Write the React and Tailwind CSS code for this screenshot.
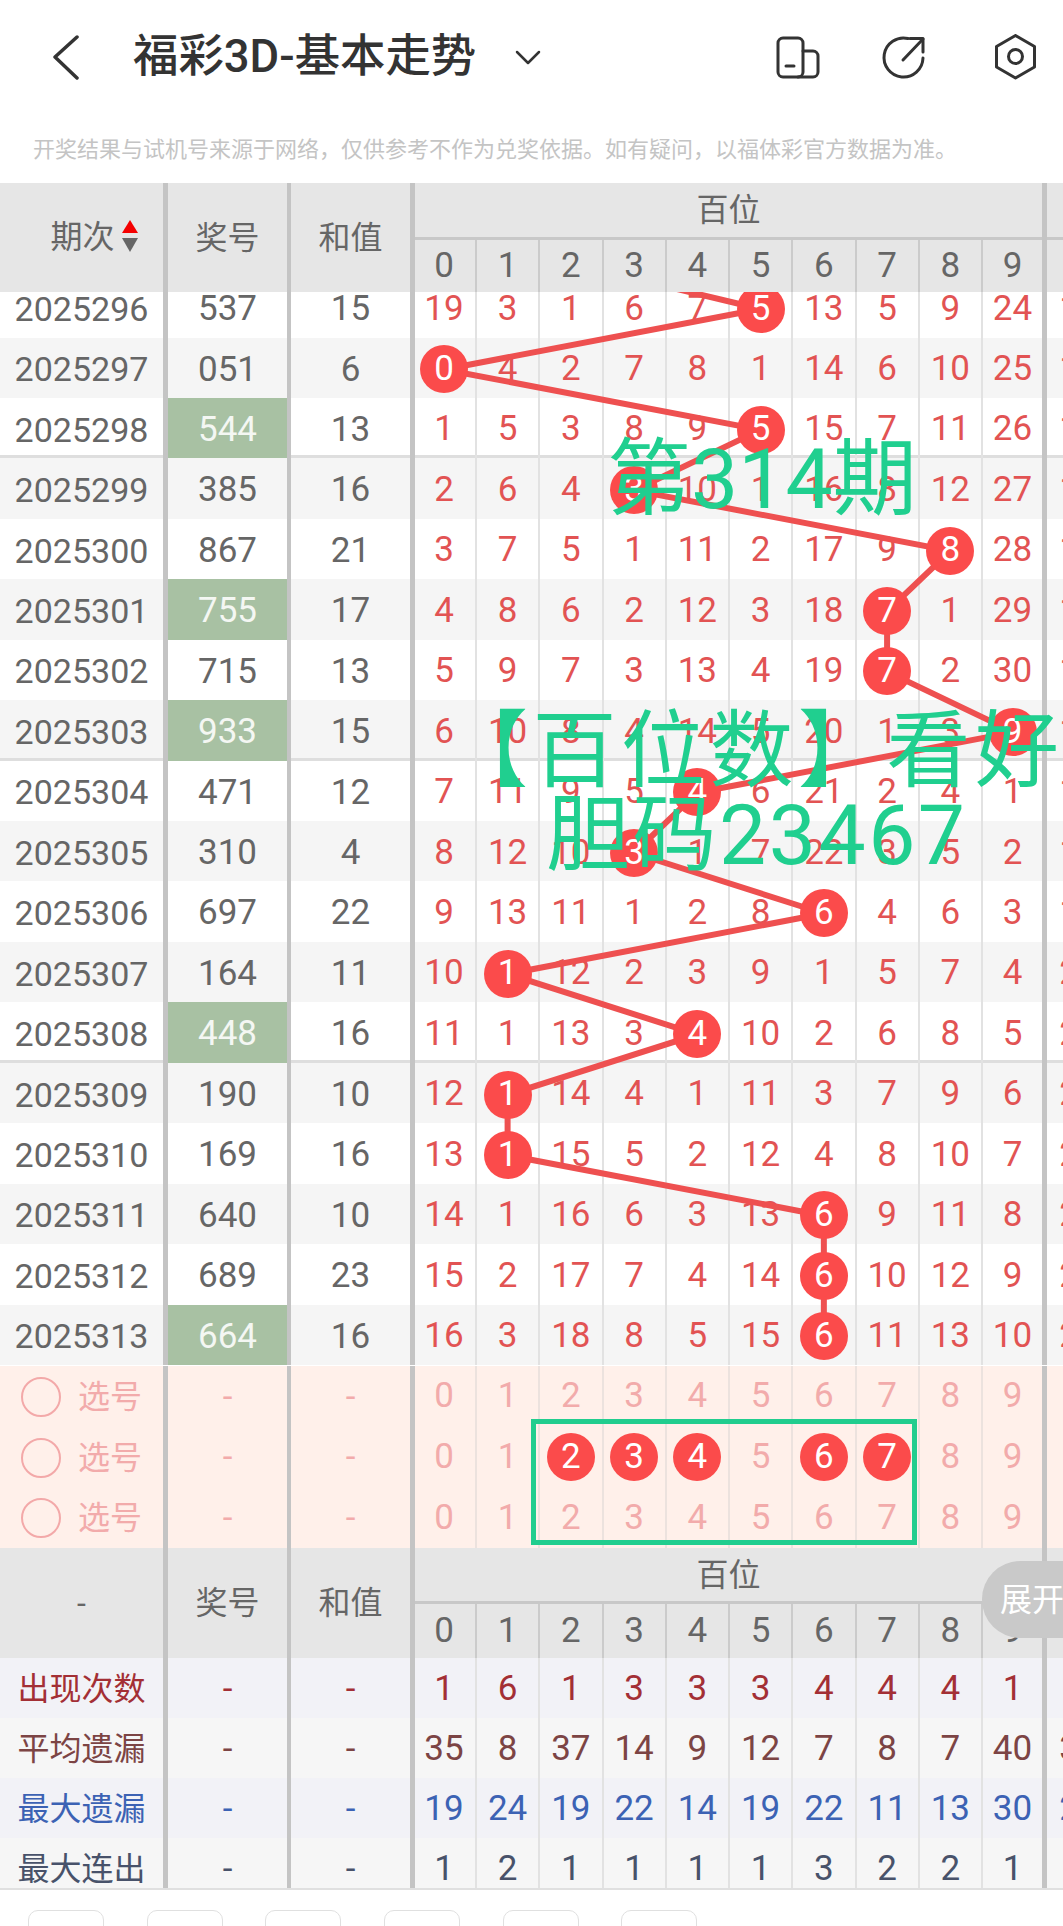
const FONT = { fontFamily: 'Roboto, "Noto Sans CJK SC", sans-serif' };

const rows = [
  ['2025296', '537', '15', [19, 3, 1, 6, 7, 5, 13, 5, 9, 24], 5, '15'],
  ['2025297', '051', '6', [0, 4, 2, 7, 8, 1, 14, 6, 10, 25], 0, '16'],
  ['2025298', '544', '13', [1, 5, 3, 8, 9, 5, 15, 7, 11, 26], 5, '17'],
  ['2025299', '385', '16', [2, 6, 4, 3, 10, 1, 16, 8, 12, 27], 3, '18'],
  ['2025300', '867', '21', [3, 7, 5, 1, 11, 2, 17, 9, 8, 28], 8, '19'],
  ['2025301', '755', '17', [4, 8, 6, 2, 12, 3, 18, 7, 1, 29], 7, '10'],
  ['2025302', '715', '13', [5, 9, 7, 3, 13, 4, 19, 7, 2, 30], 7, '11'],
  ['2025303', '933', '15', [6, 10, 8, 4, 14, 5, 20, 1, 3, 9], 9, '12'],
  ['2025304', '471', '12', [7, 11, 9, 5, 4, 6, 21, 2, 4, 1], 4, '13'],
  ['2025305', '310', '4', [8, 12, 10, 3, 1, 7, 22, 3, 5, 2], 3, '14'],
  ['2025306', '697', '22', [9, 13, 11, 1, 2, 8, 6, 4, 6, 3], 6, '15'],
  ['2025307', '164', '11', [10, 1, 12, 2, 3, 9, 1, 5, 7, 4], 1, '20'],
  ['2025308', '448', '16', [11, 1, 13, 3, 4, 10, 2, 6, 8, 5], 4, '21'],
  ['2025309', '190', '10', [12, 1, 14, 4, 1, 11, 3, 7, 9, 6], 1, '22'],
  ['2025310', '169', '16', [13, 1, 15, 5, 2, 12, 4, 8, 10, 7], 1, '23'],
  ['2025311', '640', '10', [14, 1, 16, 6, 3, 13, 6, 9, 11, 8], 6, '24'],
  ['2025312', '689', '23', [15, 2, 17, 7, 4, 14, 6, 10, 12, 9], 6, '25'],
  ['2025313', '664', '16', [16, 3, 18, 8, 5, 15, 6, 11, 13, 10], 6, '26'],
];

const highlighted = new Set(['2025298', '2025301', '2025303', '2025308', '2025313']);
const digits = [0, 1, 2, 3, 4, 5, 6, 7, 8, 9];

const colX = (i) => (i === 0 ? 444 : 507.6 + 63.25 * (i - 1));
const rowY = (k) => 32 + 60.45 * k;

function Ball({ n }) {
  return (
    <span className="relative z-10 flex h-[48px] w-[48px] shrink-0 items-center justify-center rounded-full bg-[#fb4b4b] text-white">
      {n}
    </span>
  );
}

function DigitCells({ values, border, render, pad = '' }) {
  return (
    <>
      {values.map((v, i) => {
        let size = 'w-[63.25px] border-r-2';
        if (i === 0) size = 'w-[62px] border-r-2 pr-[2px]';
        if (i === 9) size = 'w-[59px]';
        return (
          <div key={i} className={`flex h-full items-center justify-center ${size} ${border} ${pad}`}>
            {render ? render(v, i) : v}
          </div>
        );
      })}
    </>
  );
}

function LeftCols({ a, b, c, pad = '' }) {
  const sep = 'border-[#c4c4c4]';
  return (
    <>
      <div className={`flex h-full w-[168px] shrink-0 items-center justify-center border-r-[5px] ${sep} ${pad}`}>{a}</div>
      <div className={`flex h-full w-[123px] shrink-0 items-center justify-center border-r-[4px] ${sep} ${pad}`}>{b}</div>
      <div className={`flex h-full w-[124px] shrink-0 items-center justify-center border-r-[5px] ${sep} ${pad}`}>{c}</div>
    </>
  );
}

function TableHeader({ titleH, digitH, first }) {
  return (
    <div className="flex w-[1130px] bg-[#e6e6e6] text-[32px] text-[#666]" style={{ height: titleH + digitH }}>
      <LeftCols a={first} b="奖号" c="和值" />
      <div className="flex h-full w-[632px] shrink-0 flex-col border-r-[5px] border-[#c4c4c4]">
        <div className="flex items-center justify-center border-b-[3px] border-[#c8c8c8]" style={{ height: titleH }}>
          百位
        </div>
        <div className="flex text-[35px]" style={{ height: digitH }}>
          <DigitCells values={digits} border="border-[#cbcbcb]" />
        </div>
      </div>
      <div className="flex h-full w-[70px] shrink-0 flex-col">
        <div className="border-b-[3px] border-[#c8c8c8]" style={{ height: titleH }} />
      </div>
    </div>
  );
}

function SortTitle() {
  return (
    <span className="ml-[26px] mt-[-2px] flex items-center">
      期次
      <svg className="ml-[6px]" width="18" height="34" viewBox="0 0 18 34">
        <polygon points="9,0 17,13 1,13" fill="#f40000" />
        <polygon points="1,18 17,18 9,32" fill="#666666" />
      </svg>
    </span>
  );
}

function TrendRow({ row, k }) {
  const [issue, num, sum, vals, hit, next] = row;
  const hl = highlighted.has(issue);
  const bg = k % 2 === 0 ? 'bg-white' : 'bg-[#f5f5f5]';
  const groupEnd = k === 2 || k === 7 || k === 12;
  return (
    <div className={`flex h-[60.45px] w-[1130px] text-[35px] text-[#666] ${bg} ${groupEnd ? 'shadow-[inset_0_-3px_0_#dedede]' : ''}`}>
      <LeftCols
        pad="pt-[4px]"
        a={<span className="text-[34px]">{issue}</span>}
        b={
          hl ? (
            <span className="mt-[-4px] flex h-[calc(100%+4px)] w-full items-center justify-center bg-[#a8c1a3] pt-[4px] text-[#f4f7f3]">{num}</span>
          ) : (
            num
          )
        }
        c={sum}
      />
      <div className="flex h-full w-[632px] shrink-0 border-r-[5px] border-[#c4c4c4] text-[#e25353]">
        <DigitCells pad="pt-[3px]" values={vals} border="border-[#e2e2e2]" render={(v, i) => (i === hit ? <Ball n={v} /> : v)} />
      </div>
      <div className="flex h-full w-[64px] shrink-0 items-center justify-center pt-[3px] text-[#e25353]">{next}</div>
    </div>
  );
}

function TrendLine() {
  const pts = [[1, -1], ...rows.map((r, k) => [r[4], k])];
  const d = pts.map(([c, k]) => `${colX(c)},${rowY(k)}`).join(' ');
  return (
    <svg className="pointer-events-none absolute left-0 top-0 z-[1]" width="1063" height="1100" viewBox="0 0 1063 1100">
      <polyline points={d} fill="none" stroke="#ee5050" strokeWidth="6" />
    </svg>
  );
}

function PickRow({ balls }) {
  return (
    <div className="flex h-[60.8px] w-[1130px] text-[35px] text-[#f2abab]">
      <LeftCols
        pad="pt-[2px]"
        a={
          <span className="flex w-full items-center pl-[21px] text-[32px]">
            <span className="h-[40px] w-[40px] shrink-0 rounded-full border-2 border-[#f3a9a9]" />
            <span className="ml-[17px]">选号</span>
          </span>
        }
        b="-"
        c="-"
      />
      <div className="flex h-full w-[632px] shrink-0 border-r-[5px] border-[#c4c4c4]">
        <DigitCells
          pad="pt-[1px]"
          values={digits}
          border="border-[#ece2de]"
          render={(v) => (balls.includes(v) ? <Ball n={v} /> : v)}
        />
      </div>
    </div>
  );
}

function StatRow({ label, values, next, color, bg, h }) {
  return (
    <div className={`flex w-[1130px] text-[35px] ${bg} ${color}`} style={{ height: h }}>
      <LeftCols pad="pt-[2px]" a={<span className="text-[32px]">{label}</span>} b="-" c="-" />
      <div className="flex h-full w-[632px] shrink-0 border-r-[5px] border-[#c4c4c4]">
        <DigitCells pad="pt-[2px]" values={values} border="border-[#e2e2e2]" />
      </div>
      <div className="flex h-full w-[64px] shrink-0 items-center justify-center pt-[2px]">{next}</div>
    </div>
  );
}

function TopBar() {
  return (
    <div className="flex h-[115px] items-center pb-[1px] text-[#333]">
      <svg className="ml-[52px] shrink-0" width="28" height="46" viewBox="0 0 28 46" fill="none" stroke="#333" strokeWidth="3.5" strokeLinecap="round" strokeLinejoin="round">
        <path d="M25 3 L3 23 L25 44" />
      </svg>
      <div className="ml-[53px] whitespace-nowrap text-[45.4px] font-medium leading-none">福彩3D-基本走势</div>
      <svg className="ml-[39px] mt-[1px] shrink-0" width="26" height="16" viewBox="0 0 26 16" fill="none" stroke="#333" strokeWidth="2.5" strokeLinecap="round" strokeLinejoin="round">
        <path d="M2 2 L13 13 L24 2" />
      </svg>
      <svg className="ml-auto mr-[26px] shrink-0" width="262" height="46" viewBox="775 34 262 46" fill="none" stroke="#333" strokeWidth="3" strokeLinecap="round" strokeLinejoin="round">
        <rect x="778" y="38" width="25" height="39" rx="5" />
        <path d="M803 51 H813 a5 5 0 0 1 5 5 V72 a5 5 0 0 1 -5 5 H798" />
        <path d="M786 66 H794" />
        <path d="M908 38.5 A19.5 19.5 0 1 0 923 58" />
        <path d="M903 60 L923 39" />
        <path d="M910 38.5 H923 V52" />
        <path d="M1015.5 35.5 L1034.5 46.5 V67 L1015.5 78 L996.5 67 V46.5 Z" />
        <circle cx="1015.5" cy="56.5" r="7" />
      </svg>
    </div>
  );
}

export default function App() {
  return (
    <div className="relative h-[1926px] w-[1063px] overflow-hidden bg-white" style={FONT}>
      <TopBar />
      <div className="flex h-[68px] items-center pl-[33px] text-[22px] text-[#c4c4c4]">
        <span className="whitespace-nowrap">开奖结果与试机号来源于网络，仅供参考不作为兑奖依据。如有疑问，以福体彩官方数据为准。</span>
      </div>

      <TableHeader titleH={57} digitH={52} first={<SortTitle />} />

      <div className="relative h-[1073.5px] overflow-hidden">
        <div className="relative mt-[-14.9px]">
          <TrendLine />
          {rows.map((r, k) => (
            <TrendRow key={r[0]} row={r} k={k} />
          ))}
        </div>
      </div>

      <div className="relative h-[182.5px] overflow-hidden bg-[#fff0ea]">
        <PickRow balls={[]} />
        <PickRow balls={[2, 3, 4, 6, 7]} />
        <PickRow balls={[]} />
        <div className="absolute left-[531px] top-[53px] z-20 h-[126px] w-[386px] border-[5px] border-[#21cd8e]" />
      </div>

      <div className="relative">
        <TableHeader titleH={56} digitH={54} first="-" />
        <div className="absolute left-[982px] top-[13px] z-20 flex h-[77px] w-[110px] items-center rounded-l-[38px] bg-[#c9c9c9] pl-[18px] text-[32px] whitespace-nowrap text-white">
          展开
        </div>
      </div>

      <div className="h-[232px] overflow-hidden border-b-2 border-[#e0e0e0]">
        <StatRow label="出现次数" values={[1, 6, 1, 3, 3, 3, 4, 4, 4, 1]} next="" color="text-[#a32f35]" bg="bg-[#f2f2f7]" h={59.5} />
        <StatRow label="平均遗漏" values={[35, 8, 37, 14, 9, 12, 7, 8, 7, 40]} next="35" color="text-[#7c4444]" bg="bg-[#f6f6f6]" h={60.5} />
        <StatRow label="最大遗漏" values={[19, 24, 19, 22, 14, 19, 22, 11, 13, 30]} next="24" color="text-[#3c62b4]" bg="bg-[#f2f2f7]" h={60} />
        <StatRow label="最大连出" values={[1, 2, 1, 1, 1, 1, 3, 2, 2, 1]} next="" color="text-[#48526a]" bg="bg-[#f6f6f6]" h={60} />
      </div>

      <div className="flex gap-[42.7px] pl-[28px] pt-[20px]">
        {[0, 1, 2, 3, 4, 5].map((i) => (
          <div key={i} className="h-[40px] w-[76px] shrink-0 rounded-t-[10px] border border-[#e0e0e0]" />
        ))}
      </div>

      <div className="pointer-events-none absolute left-[607px] top-[430px] z-30 whitespace-nowrap text-[84px] leading-[100px] text-[#20cf8f]">第314期</div>
      <div className="pointer-events-none absolute left-[444px] top-[702px] z-30 whitespace-nowrap text-[84px] leading-[100px] tracking-[4.5px] text-[#20cf8f]">【百位数】看好</div>
      <div className="pointer-events-none absolute left-[546px] top-[786px] z-30 whitespace-nowrap text-[84px] leading-[100px] tracking-[2.5px] text-[#20cf8f]">胆码23467</div>
    </div>
  );
}
